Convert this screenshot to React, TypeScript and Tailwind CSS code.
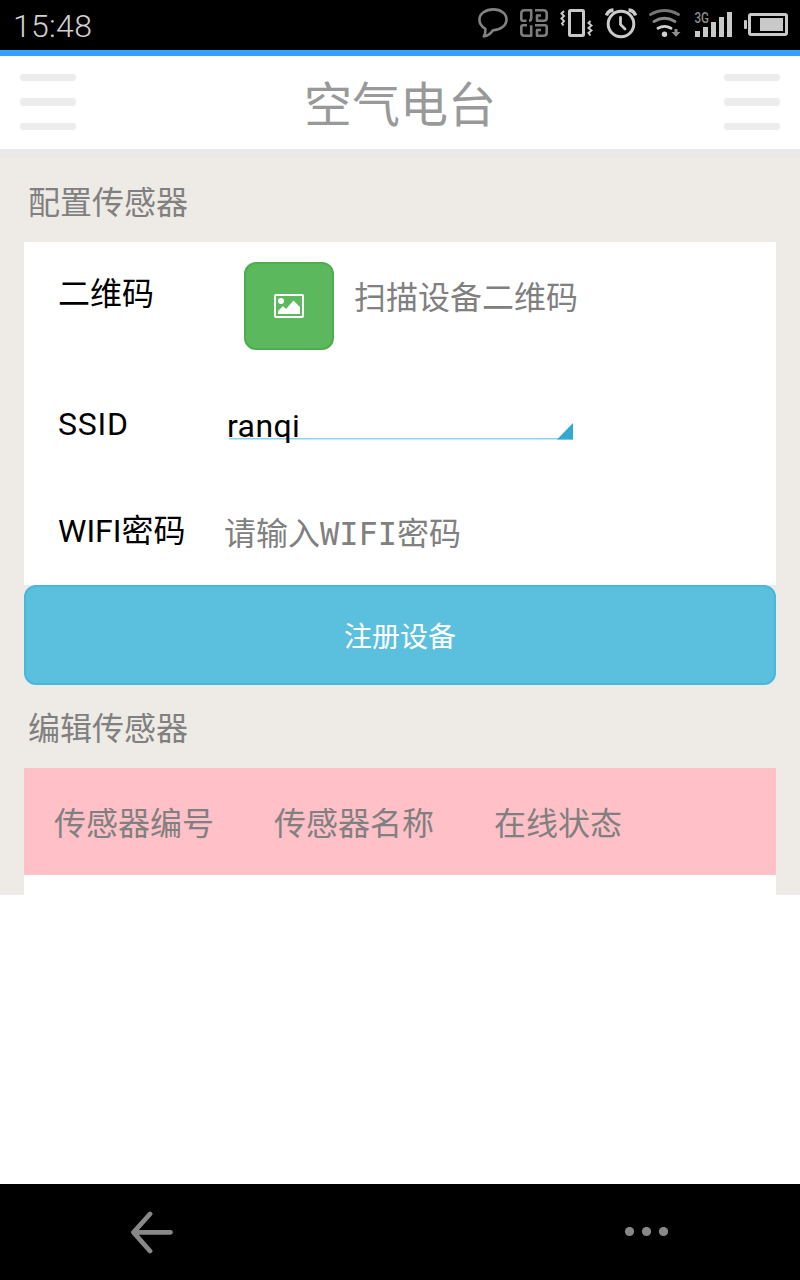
import React from "react";

const cjk = "font-['Noto_Sans_CJK_SC',sans-serif]";

function StatusBar() {
  return (
    <div className="flex h-[50px] items-center justify-between bg-black pl-[13px] pr-3">
      <span className="pt-px font-['Roboto',sans-serif] text-[32px] font-light leading-[50px] tracking-[0.3px] text-[#d0d0d0]">15:48</span>
      <div className="flex gap-3">
        <svg width="30" height="50" viewBox="0 0 30 50" fill="none" stroke="#828282" strokeWidth="2.6" strokeLinejoin="round">
          <path d="M15.5 9.4C22.8 9.4 28.5 13.6 28.5 19.4C28.5 25.6 22.5 29.8 15 30.3C12.5 33.8 9.5 36 5.8 36.4C7.2 33.8 7.6 31.2 7.4 28.8C3.7 26.8 1.4 23.6 1.4 19.6C1.4 13.6 7.6 9.4 15.5 9.4Z" />
        </svg>
        <svg width="28" height="50" viewBox="0 0 28 50" fill="none" stroke="#7c7c7c" strokeWidth="2.6" strokeLinejoin="round">
          <path d="M6.500 20.700H3Q1.300 20.700 1.300 19V13.500Q1.300 10.300 4.500 10.300H11.200V18Q11.200 20.700 9 20.700" />
          <path d="M15 10.300H23.500Q26.700 10.300 26.700 13.500V18Q26.700 20.700 24 20.700H17V15.500H21" />
          <path d="M7 25.300H3Q1.300 25.300 1.300 27V32.500Q1.300 35.700 4.500 35.700H11.200V25.300" />
          <path d="M15 25.300H25Q26.700 25.300 26.700 27V32.500Q26.700 35.700 23.500 35.700H17V30H21" />
        </svg>
        <svg width="33" height="50" viewBox="0 0 33 50" fill="none" stroke="#c8c8c8">
          <rect x="9.5" y="10.5" width="14" height="25" rx="1" strokeWidth="3" />
          <path d="M4 11L1.5 13.5L4 16L1.5 18.5L4 21L2 23.5L3.5 25.5" strokeWidth="2" />
          <path d="M30.5 21L28.5 23L31.5 25.5L28.5 28L31.5 30.5L28.5 33L30.5 35.5" strokeWidth="2" />
        </svg>
        <svg width="32" height="50" viewBox="0 0 32 50" fill="none" stroke="#cccccc" strokeWidth="3">
          <circle cx="16" cy="24" r="12.8" />
          <path d="M15.500 17.500V24.500L20 29" strokeLinecap="round" strokeWidth="2.800" />
          <path d="M1.500 15.500Q3 10.500 8.500 10M30.500 15.500Q29 10.500 23.500 10" strokeWidth="3.400" />
        </svg>
        <svg width="33" height="50" viewBox="0 0 33 50" fill="none">
          <path d="M1.500 14.500Q15.500 6.500 29.500 14.500" stroke="#747474" strokeWidth="2.800" strokeLinecap="round" />
          <path d="M5 21.500Q15.500 15 26 21.500" stroke="#888" strokeWidth="2.800" strokeLinecap="round" />
          <path d="M9 28.200Q15.500 24.500 22 28.200" stroke="#d0d0d0" strokeWidth="2.800" strokeLinecap="round" />
          <circle cx="15.500" cy="34.300" r="2.700" fill="#d0d0d0" />
          <path d="M25.500 29H28.500V32H31.500L27 36.800L22.500 32H25.500Z" fill="#909090" />
        </svg>
        <svg width="38" height="50" viewBox="0 0 38 50" fill="#c9c9c9">
          <text x="0.500" y="23" fontSize="14.500" fontWeight="500" textLength="14.500" lengthAdjust="spacingAndGlyphs" className="font-['Roboto',sans-serif]" fill="#8f8f8f">3G</text>
          <rect x="1" y="31" width="5" height="6" />
          <rect x="9" y="27" width="5" height="10" />
          <rect x="17" y="22" width="5" height="15" />
          <rect x="25" y="17" width="5" height="20" />
          <rect x="33" y="12" width="5" height="25" />
        </svg>
        <svg width="44" height="50" viewBox="0 0 44 50" fill="#c9c9c9">
          <rect x="0" y="20" width="3" height="9" rx="1" />
          <rect x="5.500" y="14.500" width="37" height="20" rx="1.500" fill="none" stroke="#c9c9c9" strokeWidth="3" />
          <rect x="16" y="18" width="23" height="13" />
        </svg>
      </div>
    </div>
  );
}

function MenuButton() {
  return (
    <button aria-label="菜单" className="flex w-14 flex-col gap-[17px] pb-px">
      <span className="h-[7.300px] w-full rounded-[3px] bg-[#ececec]" />
      <span className="h-[7.300px] w-full rounded-[3px] bg-[#ececec]" />
      <span className="h-[7.300px] w-full rounded-[3px] bg-[#ececec]" />
    </button>
  );
}

function PictureIcon() {
  return (
    <svg width="30" height="24" viewBox="0 0 30 24">
      <rect x="1" y="1" width="28" height="22" rx="1" fill="none" stroke="#fff" strokeWidth="2" />
      <circle cx="7" cy="7" r="3" fill="#fff" />
      <path d="M4 20V17L9 12L12 15L19.500 6.500L26 13V20Z" fill="#fff" />
    </svg>
  );
}

export default function App() {
  return (
    <div className={`flex h-[1280px] w-[800px] flex-col overflow-hidden bg-white ${cjk}`}>
      <StatusBar />
      <div className="h-1.5 bg-[#33a1fd]" />
      <header className="flex h-[93px] items-center justify-between px-5">
        <MenuButton />
        <h1 className="pb-1 text-5xl font-normal leading-[80px] text-[#999]">空气电台</h1>
        <MenuButton />
      </header>
      <div className="h-[9px] bg-[#e9e9e9]" />

      <main className="h-[737px] overflow-hidden bg-[#eeebe6] px-6 text-[32px]">
        <h2 className="h-[84px] pl-1 pt-[18px] leading-[48px] text-[#808080]">配置传感器</h2>
        <section className="h-[343px] bg-white pl-[34px] pt-5">
          <div className="flex h-[88px]">
            <div className="w-[186px] pt-[5px] leading-[48px] text-black">二维码</div>
            <button aria-label="扫描" className="flex h-[88px] w-[90px] items-center justify-center rounded-xl border-2 border-[#4cae4c] bg-[#5cb85c]">
              <PictureIcon />
            </button>
            <div className="pl-5 pt-[9px] leading-[48px] text-[#808080]">扫描设备二维码</div>
          </div>
          <div className="mt-[50px] flex h-[48px] font-['Roboto',sans-serif] text-black">
            <div className="w-[169px] leading-[48px] tracking-[0.8px]">SSID</div>
            <div className="relative w-[346px] pt-[2px] leading-[48px]">
              <svg className="absolute left-[2px] top-[22px]" width="344" height="18" viewBox="0 0 344 18">
                <path d="M0 16.800H344" stroke="#8fd3e8" strokeWidth="1.600" />
                <path d="M328 17.500L344 1V17.500Z" fill="#33a9d2" />
              </svg>
              <span className="relative tracking-[0.4px]">ranqi</span>
            </div>
          </div>
          <div className="mt-[59px] flex h-[48px] leading-[48px]">
            <div className="w-[166px] font-['Roboto','Noto_Sans_CJK_SC',sans-serif] text-black">WIFI密码</div>
            <div className="pt-[3px] font-['DejaVu_Sans_Mono','Noto_Sans_CJK_SC',monospace] text-[#808080]">请输入WIFI密码</div>
          </div>
        </section>
        <button className="block h-[100px] w-full rounded-xl border-2 border-[#46b8da] bg-[#5bc0de] text-center text-[28px] text-white">注册设备</button>
        <h2 className="h-[83px] pl-1 pt-[17px] leading-[48px] text-[#808080]">编辑传感器</h2>
        <section className="bg-white">
          <div className="flex h-[107px] items-center bg-[#ffc0c8] pb-[2px] pl-[30px] text-[#808080]">
            <div className="w-[220px]">传感器编号</div>
            <div className="w-[220px]">传感器名称</div>
            <div>在线状态</div>
          </div>
          <div className="h-5" />
        </section>
      </main>

      <div className="flex-1" />
      <nav className="flex h-24 items-center justify-between bg-black pl-[130px] pr-[132px]">
        <svg width="44" height="44" viewBox="0 0 44 44" fill="none" stroke="#888" strokeWidth="4.800" strokeLinecap="round" strokeLinejoin="round">
          <path d="M20 4L3.500 22.300L20 41M3.500 22.300H40.500" />
        </svg>
        <svg width="44" height="10" viewBox="0 0 44 10" fill="#888">
          <circle cx="5.500" cy="4.500" r="4.600" />
          <circle cx="22.500" cy="4.500" r="4.600" />
          <circle cx="39.500" cy="4.500" r="4.600" />
        </svg>
      </nav>
    </div>
  );
}
